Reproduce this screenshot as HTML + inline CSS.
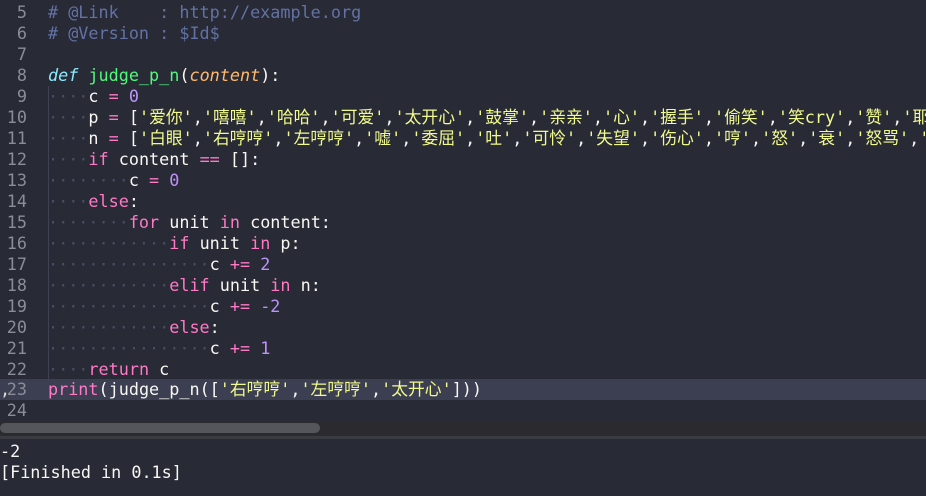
<!DOCTYPE html>
<html><head><meta charset="utf-8"><style>
body{margin:0;width:926px;height:496px;overflow:hidden;background:#282a36;font-family:"DejaVu Sans Mono","Liberation Mono","Noto Sans CJK SC",monospace;font-size:16.8px;color:#f8f8f2}
.ed{position:absolute;left:0;top:0;width:926px;height:421px;background:#282a36;overflow:hidden}
.l{position:absolute;left:0;height:21px;line-height:21px;white-space:pre;width:926px;overflow:hidden}
.n{position:absolute;left:0;width:27px;text-align:right;color:#8a8c96}
.c{position:absolute;left:48px}
.hl{background:#3c3f52}
.w{color:#4a4d60}
.cm{color:#6272a4}.k{color:#ff79c6}.d{color:#8be9fd;font-style:italic}.f{color:#50fa7b}.p{color:#ffb86c;font-style:italic}.s{color:#f1fa8c}.num{color:#bd93f9}
.g{position:absolute;border-left:1px solid #3e4152;width:0}
.sb{position:absolute;left:0;top:421px;width:926px;height:14px;background:#2b2b2f}
.th{position:absolute;left:0;top:423px;width:320px;height:10px;border-radius:5px;background:#55565c}
.sep{position:absolute;left:0;top:436px;width:926px;height:3px;background:#3a3b40}
.out{position:absolute;left:0;white-space:pre;line-height:21px;color:#f8f8f2}
</style></head><body>
<div class="ed">
<div class="l" style="top:2px"><span class="n">5</span><span class="c cm"># @Link    : http://example.org</span></div>
<div class="l" style="top:23px"><span class="n">6</span><span class="c cm"># @Version : $Id$</span></div>
<div class="l" style="top:44px"><span class="n">7</span></div>
<div class="l" style="top:65px"><span class="n">8</span><span class="c"><span class="d">def</span> <span class="f">judge_p_n</span>(<span class="p">content</span>):</span></div>
<div class="l" style="top:86px"><span class="n">9</span><span class="c"><span class="w">····</span>c <span class="k">=</span> <span class="num">0</span></span></div>
<div class="l" style="top:107px"><span class="n">10</span><span class="c"><span class="w">····</span>p <span class="k">=</span> [<span class="s">'爱你'</span>,<span class="s">'嘻嘻'</span>,<span class="s">'哈哈'</span>,<span class="s">'可爱'</span>,<span class="s">'太开心'</span>,<span class="s">'鼓掌'</span>,<span class="s">'亲亲'</span>,<span class="s">'心'</span>,<span class="s">'握手'</span>,<span class="s">'偷笑'</span>,<span class="s">'笑cry'</span>,<span class="s">'赞'</span>,<span class="s">'耶'</span>,</span></div>
<div class="l" style="top:128px"><span class="n">11</span><span class="c"><span class="w">····</span>n <span class="k">=</span> [<span class="s">'白眼'</span>,<span class="s">'右哼哼'</span>,<span class="s">'左哼哼'</span>,<span class="s">'嘘'</span>,<span class="s">'委屈'</span>,<span class="s">'吐'</span>,<span class="s">'可怜'</span>,<span class="s">'失望'</span>,<span class="s">'伤心'</span>,<span class="s">'哼'</span>,<span class="s">'怒'</span>,<span class="s">'衰'</span>,<span class="s">'怒骂'</span>,<span class="s">'悲伤'</span></span></div>
<div class="l" style="top:149px"><span class="n">12</span><span class="c"><span class="w">····</span><span class="k">if</span> content <span class="k">==</span> []:</span></div>
<div class="l" style="top:170px"><span class="n">13</span><span class="c"><span class="w">········</span>c <span class="k">=</span> <span class="num">0</span></span></div>
<div class="l" style="top:191px"><span class="n">14</span><span class="c"><span class="w">····</span><span class="k">else</span>:</span></div>
<div class="l" style="top:212px"><span class="n">15</span><span class="c"><span class="w">········</span><span class="k">for</span> unit <span class="k">in</span> content:</span></div>
<div class="l" style="top:233px"><span class="n">16</span><span class="c"><span class="w">············</span><span class="k">if</span> unit <span class="k">in</span> p:</span></div>
<div class="l" style="top:254px"><span class="n">17</span><span class="c"><span class="w">················</span>c <span class="k">+=</span> <span class="num">2</span></span></div>
<div class="l" style="top:275px"><span class="n">18</span><span class="c"><span class="w">············</span><span class="k">elif</span> unit <span class="k">in</span> n:</span></div>
<div class="l" style="top:296px"><span class="n">19</span><span class="c"><span class="w">················</span>c <span class="k">+=</span> <span class="num">-2</span></span></div>
<div class="l" style="top:317px"><span class="n">20</span><span class="c"><span class="w">············</span><span class="k">else</span>:</span></div>
<div class="l" style="top:338px"><span class="n">21</span><span class="c"><span class="w">················</span>c <span class="k">+=</span> <span class="num">1</span></span></div>
<div class="l" style="top:359px"><span class="n">22</span><span class="c"><span class="w">····</span><span class="k">return</span> c</span></div>
<div class="l hl" style="top:379px"><span class="n">23</span><span style="position:absolute;left:0;color:#ddd">,</span><span class="c"><span class="k">print</span>(judge_p_n([<span class="s">'右哼哼'</span>,<span class="s">'左哼哼'</span>,<span class="s">'太开心'</span>]))</span></div>
<div class="l" style="top:400px"><span class="n">24</span></div>
<div class="g" style="left:48px;top:86px;height:294px"></div>
</div>
<div class="sb"></div><div class="th"></div><div class="sep"></div>
<div class="out" style="top:441px">-2</div>
<div class="out" style="top:462px">[Finished in 0.1s]</div>
</body></html>
